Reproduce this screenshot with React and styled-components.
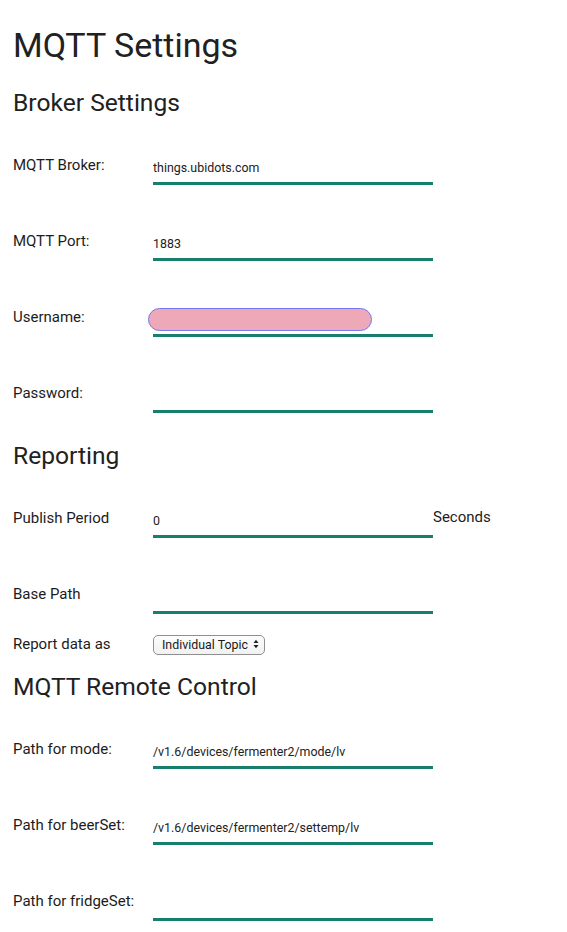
import React from "react";
import styled, { createGlobalStyle } from "styled-components";

const Global = createGlobalStyle`
  html, body { margin: 0; padding: 0; background: #ffffff; }
  body { font-family: Roboto, "Noto Sans", "Liberation Sans", sans-serif; color: #212121; }
  * { box-sizing: border-box; }
`;

const Page = styled.div`
  padding: 0 0 20px 13px;
  width: 567px;
`;

const Title = styled.h1`
  margin: 25px 0 0 0;
  font-size: 34px;
  line-height: 40px;
  font-weight: 400;
  color: #212121;
`;

const SectionTitle = styled.h2`
  margin: ${(p) => p.$top}px 0 0 0;
  font-size: 24.6px;
  line-height: 32px;
  font-weight: 400;
  color: #212121;
`;

const Rows = styled.div`
  display: flex;
  flex-direction: column;
  gap: 10px;
`;

const Row = styled.div`
  display: flex;
  align-items: ${(p) => (p.$compact ? "center" : "flex-end")};
  height: ${(p) => (p.$compact ? "20px" : "66px")};
  margin-top: ${(p) => (p.$compact ? "10px" : "0")};
`;

const Label = styled.label`
  width: 140px;
  flex: none;
  font-size: 15px;
  line-height: 20px;
  color: #1c1c1c;
  padding-bottom: ${(p) => (p.$compact ? "0" : "10px")};
`;

const FieldWrap = styled.div`
  position: relative;
  width: 280px;
  flex: none;
`;

const TextInput = styled.input`
  display: block;
  width: 280px;
  height: 26px;
  padding: 0 0 7px 0;
  border: none;
  border-bottom: 3px solid #187f6e;
  outline: none;
  background: transparent;
  font-family: Roboto, "Noto Sans", sans-serif;
  font-size: 12.4px;
  color: #222222;
`;

const Redaction = styled.div`
  position: absolute;
  left: -5px;
  top: -3px;
  width: 224px;
  height: 23px;
  border-radius: 12px;
  background: #eea9b8;
  border: 1px solid #7878ee;
`;

const Unit = styled.span`
  font-size: 15px;
  line-height: 20px;
  color: #1c1c1c;
  padding-bottom: 11px;
`;

const SelectWrap = styled.div`
  position: relative;
  width: 112px;
  height: 20px;
`;

const Select = styled.select`
  appearance: none;
  -webkit-appearance: none;
  width: 112px;
  height: 20px;
  padding: 0 16px 0 8px;
  border: 1px solid #8f8f8f;
  border-radius: 5px;
  background: linear-gradient(#fdfdfd, #f1f1f1);
  font-family: Roboto, "Noto Sans", sans-serif;
  font-size: 12.4px;
  color: #1a1a1a;
  outline: none;
`;

const Arrows = styled.svg`
  position: absolute;
  right: 6px;
  top: 5px;
  pointer-events: none;
`;

function Field({ label, value, redacted, unit }) {
  return (
    <Row>
      <Label>{label}</Label>
      <FieldWrap>
        <TextInput type="text" defaultValue={value || ""} />
        {redacted && <Redaction />}
      </FieldWrap>
      {unit && <Unit>{unit}</Unit>}
    </Row>
  );
}

export default function App() {
  return (
    <Page>
      <Global />
      <Title>MQTT Settings</Title>
      <SectionTitle $top={22}>Broker Settings</SectionTitle>
      <Rows>
        <Field label="MQTT Broker:" value="things.ubidots.com" />
        <Field label="MQTT Port:" value="1883" />
        <Field label="Username:" redacted />
        <Field label="Password:" />
      </Rows>
      <SectionTitle $top={27}>Reporting</SectionTitle>
      <Rows>
        <Field label="Publish Period" value="0" unit="Seconds" />
        <Field label="Base Path" />
        <Row $compact>
          <Label $compact>Report data as</Label>
          <SelectWrap>
            <Select defaultValue="individual">
              <option value="individual">Individual Topic</option>
              <option value="json">JSON</option>
            </Select>
            <Arrows width="6" height="10" viewBox="0 0 6 10">
              <path d="M0.5 4 L3 0.8 L5.5 4 Z" fill="#222" />
              <path d="M0.5 6 L3 9.2 L5.5 6 Z" fill="#222" />
            </Arrows>
          </SelectWrap>
        </Row>
      </Rows>
      <SectionTitle $top={17}>MQTT Remote Control</SectionTitle>
      <Rows>
        <Field label="Path for mode:" value="/v1.6/devices/fermenter2/mode/lv" />
        <Field label="Path for beerSet:" value="/v1.6/devices/fermenter2/settemp/lv" />
        <Field label="Path for fridgeSet:" />
      </Rows>
    </Page>
  );
}
